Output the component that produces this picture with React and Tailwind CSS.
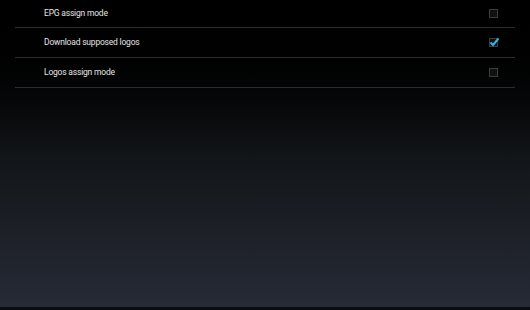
import React from 'react'

const settings = [
  { id: 'epg', label: 'EPG assign mode', checked: false },
  { id: 'logos', label: 'Download supposed logos', checked: true },
  { id: 'assign', label: 'Logos assign mode', checked: false },
]

const CheckBox = ({ checked }) => (
  <div className="relative w-[9px] h-[9px] border border-[#3c3c3c] bg-[#111]">
    {checked && (
      <svg className="absolute -left-[1px] -top-[2px]" width="11" height="10" viewBox="0 0 11 10">
        <path d="M1.5 5.5 L4 8 L9.5 1.5" fill="none" stroke="#33b5e5" strokeWidth="2" />
      </svg>
    )}
  </div>
)

const App = () => {
  return (
    <div className="w-[530px] h-[310px] flex flex-col bg-gradient-to-b from-[#000000] via-[#121518] to-[#272b37] font-['Roboto',sans-serif]">
      <div className="flex-1 px-[15px]">
        {settings.map((item) => (
          <div
            key={item.id}
            className="h-[30px] first:h-[28px] flex items-center justify-between pl-[29px] pr-[17px] border-b border-[#2a2c2e]"
          >
            <span className="text-[8.5px] tracking-[-0.2px] text-[#e4e4e4]">{item.label}</span>
            <CheckBox checked={item.checked} />
          </div>
        ))}
      </div>
      <div className="h-[3px] bg-[#0c0c0c]" />
    </div>
  )
}

export default App
